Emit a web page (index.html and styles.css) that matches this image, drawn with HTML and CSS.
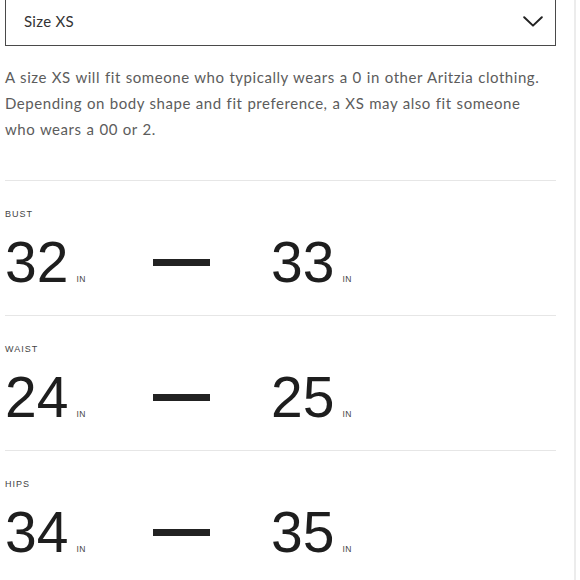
FILE: index.html
```html
<!DOCTYPE html>
<html>
<head>
<meta charset="utf-8">
<link rel="stylesheet" href="styles.css">
</head>
<body>
<div class="page">
  <div class="panel">
    <div class="select">
      <span class="select-label">Size XS</span>
      <svg class="chevron" width="20" height="11" viewBox="0 0 20 11"><path d="M1.2 1.2 L10 9.6 L18.8 1.2" fill="none" stroke="#222" stroke-width="2" stroke-linecap="round" stroke-linejoin="round"/></svg>
    </div>
    <p class="desc">A size XS will fit someone who typically wears a 0 in other Aritzia clothing. Depending on body shape and fit preference, a XS may also fit someone who wears a 00 or 2.</p>
    <div class="measure">
      <div class="label">BUST</div>
      <div class="range">
        <div class="val first"><span class="num">32</span><span class="unit">IN</span></div>
        <div class="dash"></div>
        <div class="val"><span class="num">33</span><span class="unit">IN</span></div>
      </div>
    </div>
    <div class="measure">
      <div class="label">WAIST</div>
      <div class="range">
        <div class="val first"><span class="num">24</span><span class="unit">IN</span></div>
        <div class="dash"></div>
        <div class="val"><span class="num">25</span><span class="unit">IN</span></div>
      </div>
    </div>
    <div class="measure">
      <div class="label">HIPS</div>
      <div class="range">
        <div class="val first"><span class="num">34</span><span class="unit">IN</span></div>
        <div class="dash"></div>
        <div class="val"><span class="num">35</span><span class="unit">IN</span></div>
      </div>
    </div>
  </div>
  <div class="track"></div>
</div>
</body>
</html>
```

FILE: styles.css
```css
html, body {
  margin: 0;
  padding: 0;
  background: #fff;
  overflow: hidden;
}
.page {
  display: flex;
  height: 580px;
}
.panel {
  width: 551px;
  margin-left: 5px;
  font-family: "Lato", "Liberation Sans", sans-serif;
}
.track {
  width: 2px;
  margin-left: 18px;
  background: #ececec;
}
.select {
  box-sizing: border-box;
  height: 48px;
  margin-top: -2px;
  border: 1px solid #4a4a4a;
  display: flex;
  align-items: center;
  justify-content: space-between;
  padding: 0 12px 2px 18px;
}
.select-label {
  font-size: 15px;
  color: #333;
  letter-spacing: 0.3px;
}
.chevron {
  display: block;
}
.desc {
  margin: 18px 0 0 0;
  font-size: 15px;
  line-height: 26px;
  color: #5c5c5c;
  letter-spacing: 0.55px;
  word-spacing: 0.5px;
  padding: 0 12px 38px 0;
  border-bottom: 1px solid #e6e6e6;
}
.measure {
  border-bottom: 1px solid #e6e6e6;
  height: 135px;
  box-sizing: border-box;
  padding-top: 28px;
}
.label {
  font-family: "Liberation Sans", Arial, sans-serif;
  font-size: 9px;
  letter-spacing: 1px;
  color: #444;
  line-height: 10px;
}
.range {
  display: flex;
  align-items: center;
  margin-top: 17px;
}
.val {
  display: flex;
  align-items: baseline;
  color: #1e1e1e;
}
.val.first {
  width: 148px;
}
.num {
  font-family: "Liberation Sans", Arial, sans-serif;
  font-size: 57px;
  line-height: 52px;
}
.unit {
  font-family: "Liberation Sans", Arial, sans-serif;
  font-size: 8.5px;
  margin-left: 8px;
  letter-spacing: 0.4px;
  color: #444;
}
.dash {
  width: 57px;
  height: 7px;
  background: #222;
  margin-right: 61px;
}
```
